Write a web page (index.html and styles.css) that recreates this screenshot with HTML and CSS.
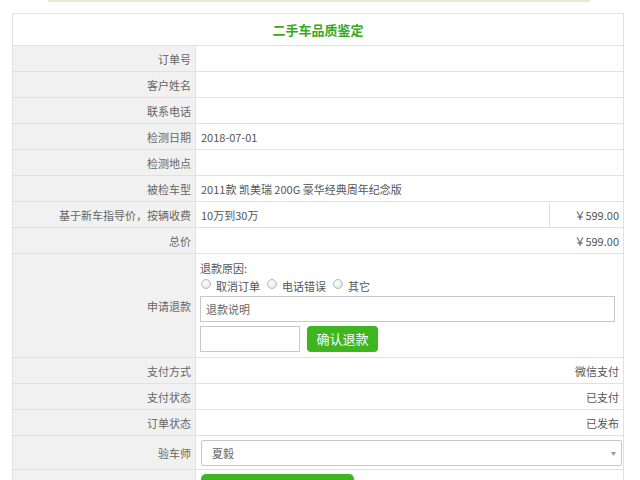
FILE: index.html
```html
<!DOCTYPE html>
<html lang="zh-CN">
<head>
<meta charset="utf-8">
<link rel="stylesheet" href="styles.css">
</head>
<body>
<div class="page">
  <div class="topstrip"></div>
  <table class="sheet">
    <colgroup><col class="c-label"><col class="c-value"><col class="c-price"></colgroup>
    <tr class="title-row"><td colspan="3">二手车品质鉴定</td></tr>
    <tr><th>订单号</th><td colspan="2"></td></tr>
    <tr><th>客户姓名</th><td colspan="2"></td></tr>
    <tr><th>联系电话</th><td colspan="2"></td></tr>
    <tr><th>检测日期</th><td colspan="2">2018-07-01</td></tr>
    <tr><th>检测地点</th><td colspan="2"></td></tr>
    <tr><th>被检车型</th><td colspan="2">2011款 凯美瑞 200G 豪华经典周年纪念版</td></tr>
    <tr><th>基于新车指导价，按辆收费</th><td>10万到30万</td><td class="right">￥599.00</td></tr>
    <tr><th>总价</th><td colspan="2" class="right">￥599.00</td></tr>
    <tr class="refund-row">
      <th>申请退款</th>
      <td colspan="2">
        <div class="refund">
          <div class="line">退款原因:</div>
          <div class="line radios">
            <span class="radio"></span><span class="opt">取消订单</span>
            <span class="radio"></span><span class="opt">电话错误</span>
            <span class="radio"></span><span class="opt">其它</span>
          </div>
          <div class="textbox">退款说明</div>
          <div class="actions">
            <div class="smallbox"></div>
            <div class="btn">确认退款</div>
          </div>
        </div>
      </td>
    </tr>
    <tr><th>支付方式</th><td colspan="2" class="right">微信支付</td></tr>
    <tr><th>支付状态</th><td colspan="2" class="right">已支付</td></tr>
    <tr><th>订单状态</th><td colspan="2" class="right">已发布</td></tr>
    <tr class="select-row"><th>验车师</th><td colspan="2"><div class="select"><span>夏毅</span><span class="arrow">▼</span></div></td></tr>
    <tr class="last-row"><th></th><td colspan="2"><div class="bigbtn"></div></td></tr>
  </table>
</div>
</body>
</html>
```
FILE: styles.css
```css
html, body {
  margin: 0;
  padding: 0;
  background: #fff;
}
body {
  font-family: "Noto Sans CJK SC", "Noto Sans", sans-serif;
  font-size: 11px;
  color: #555;
  overflow: hidden;
  height: 480px;
}
.page {
  padding: 0 16px 0 12px;
}
.topstrip {
  height: 2px;
  margin: 0 34px 0 36px;
  background: #e6ead2;
}
.sheet {
  margin-top: 11px;
  width: 612px;
  border-collapse: collapse;
  table-layout: fixed;
}
.c-label { width: 183px; }
.c-price { width: 74px; }
.sheet th, .sheet td {
  border: 1px solid #e1e1e1;
  height: 25px;
  padding: 0 4px 0 5px;
  line-height: 16px;
  font-weight: normal;
  white-space: nowrap;
  overflow: hidden;
}
.sheet th {
  background: #f1f1f1;
  text-align: right;
  padding: 0 4px 0 4px;
  color: #666;
}
.sheet td.right {
  text-align: right;
}
.title-row td {
  height: 31px;
  text-align: center;
  color: #3aa81c;
  font-size: 13px;
  font-weight: bold;
  padding: 0;
}
.refund-row td {
  padding: 6px 4px 5px 4px;
}
.refund .line {
  height: 16px;
  line-height: 16px;
  margin-bottom: 1px;
}
.radios {
  display: flex;
  align-items: center;
}
.radio {
  width: 8px;
  height: 8px;
  border-radius: 50%;
  border: 1px solid #bbb;
  background: radial-gradient(circle at 40% 35%, #fff, #ddd);
  margin: 0 5px 3px 1px;
}
.opt {
  margin-right: 6px;
  position: relative;
  top: 1px;
}
.textbox {
  margin-top: 3px;
  width: 408px;
  height: 24px;
  border: 1px solid #c8c8c8;
  padding-left: 5px;
  line-height: 24px;
  color: #666;
}
.actions {
  margin-top: 4px;
  display: flex;
  gap: 7px;
}
.smallbox {
  width: 98px;
  height: 24px;
  border: 1px solid #c8c8c8;
}
.btn {
  width: 71px;
  height: 26px;
  background: #3fb520;
  color: #fff;
  border-radius: 4px;
  font-size: 13px;
  line-height: 26px;
  text-align: center;
}
.select-row th, .select-row td {
  height: 33px;
}
.select {
  width: 404px;
  height: 24px;
  border: 1px solid #c8c8c8;
  border-radius: 2px;
  display: flex;
  justify-content: space-between;
  align-items: center;
  padding: 0 5px 0 10px;
  color: #666;
}
.arrow {
  font-size: 5px;
  color: #999;
}
.last-row th, .last-row td {
  height: 30px;
  vertical-align: top;
  padding-top: 4px;
}
.bigbtn {
  width: 153px;
  height: 30px;
  background: #3fb520;
  border-radius: 5px;
}
```
